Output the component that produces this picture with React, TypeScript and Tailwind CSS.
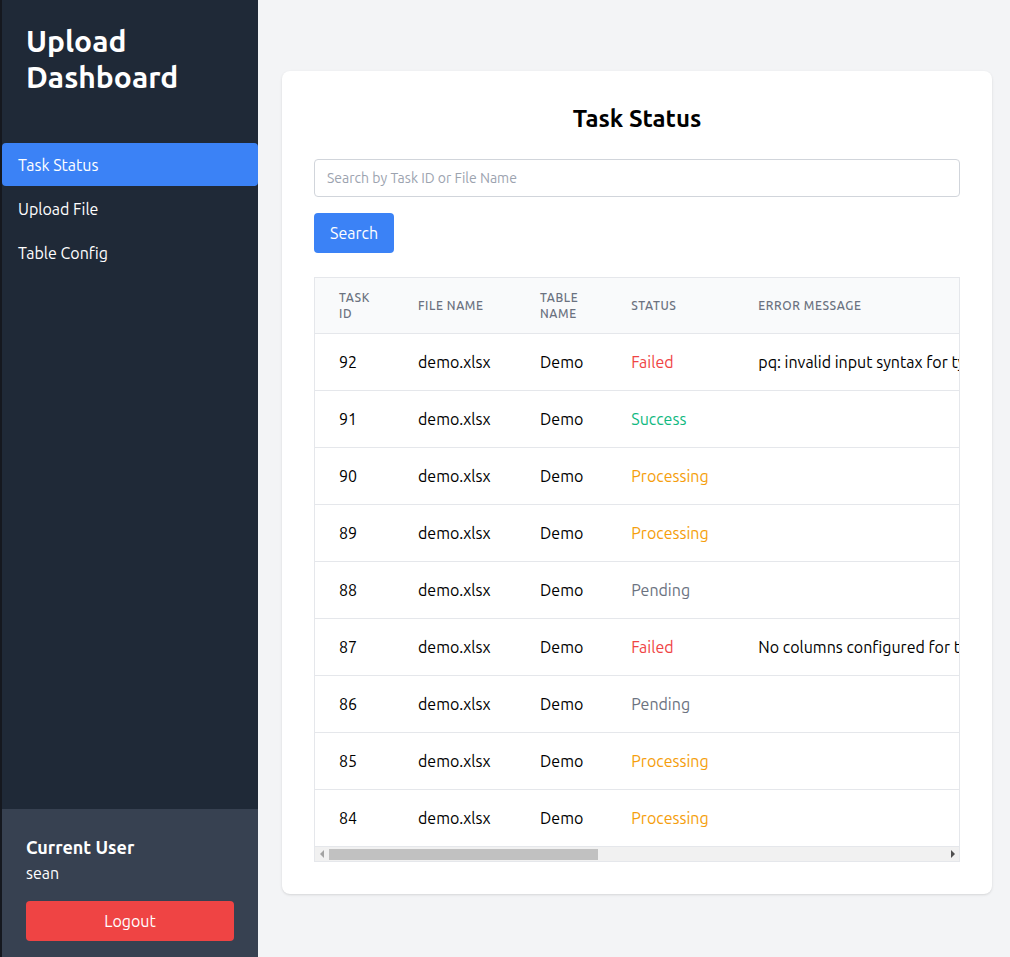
import React from "react";

const rows = [
  { id: 92, file: "demo.xlsx", table: "Demo", status: "Failed", err: "pq: invalid input syntax for type integer: \"abc\" (SQLSTATE 22P02)" },
  { id: 91, file: "demo.xlsx", table: "Demo", status: "Success", err: "" },
  { id: 90, file: "demo.xlsx", table: "Demo", status: "Processing", err: "" },
  { id: 89, file: "demo.xlsx", table: "Demo", status: "Processing", err: "" },
  { id: 88, file: "demo.xlsx", table: "Demo", status: "Pending", err: "" },
  { id: 87, file: "demo.xlsx", table: "Demo", status: "Failed", err: "No columns configured for table Demo" },
  { id: 86, file: "demo.xlsx", table: "Demo", status: "Pending", err: "" },
  { id: 85, file: "demo.xlsx", table: "Demo", status: "Processing", err: "" },
  { id: 84, file: "demo.xlsx", table: "Demo", status: "Processing", err: "" },
];

function statusClass(s: string) {
  if (s === "Failed") return "text-[#ef4444]";
  if (s === "Success") return "text-[#10b981]";
  if (s === "Processing") return "text-[#f59e0b]";
  return "text-[#6b7280]";
}

export default function App() {
  return (
    <div
      className="flex h-[957px] w-full overflow-hidden bg-[#f3f4f6]"
      style={{ fontFamily: "Ubuntu, Lato, 'Noto Sans', sans-serif" }}
    >
      <aside className="flex w-[258px] shrink-0 flex-col border-l-2 border-[#15181f] bg-[#1f2937] text-white">
        <div className="px-6 pt-[23px]">
          <h1 className="text-[30px] font-bold leading-[36px]">Upload Dashboard</h1>
        </div>
        <nav className="mt-[48px] flex flex-col">
          <a className="block h-[43px] rounded bg-[#3b82f6] px-4 text-base leading-[45px]">Task Status</a>
          <a className="block h-[44px] px-4 text-base leading-[46px]">Upload File</a>
          <a className="block h-[44px] px-4 text-base leading-[46px]">Table Config</a>
        </nav>
        <div className="mt-auto h-[148px] bg-[#374151] px-6 pt-[24px]">
          <div className="text-lg font-bold leading-7">Current User</div>
          <div className="text-base leading-6">sean</div>
          <button className="mt-[16px] h-10 w-[208px] rounded bg-[#ef4444] text-base text-white">Logout</button>
        </div>
      </aside>
      <main className="min-w-0 flex-1 pl-6 pr-[18px] pt-[71px]">
        <div className="h-[823px] rounded-lg bg-white px-8 pt-[32px] shadow">
          <h2 className="text-center text-2xl font-bold leading-8 text-black">Task Status</h2>
          <input
            className="mt-[24px] block h-[38px] w-full rounded border border-[#d1d5db] px-3 text-sm placeholder:text-[#9ca3af]"
            placeholder="Search by Task ID or File Name"
          />
          <button className="mt-4 h-10 rounded bg-[#3b82f6] px-4 text-base text-white">Search</button>
          <div className="mt-6 overflow-hidden border border-[#e5e7eb]">
            <table className="w-[1500px] border-collapse text-left">
              <thead className="bg-[#f9fafb]">
                <tr className="h-[55px]">
                  <th className="w-[79px] px-6 pt-[2px] text-xs font-medium uppercase leading-4 tracking-wider text-[#6b7280]">Task ID</th>
                  <th className="w-[122px] px-6 pt-[2px] text-xs font-medium uppercase leading-4 tracking-wider text-[#6b7280]">File Name</th>
                  <th className="w-[91px] px-6 pt-[2px] text-xs font-medium uppercase leading-4 tracking-wider text-[#6b7280]">Table Name</th>
                  <th className="w-[127px] px-6 pt-[2px] text-xs font-medium uppercase leading-4 tracking-wider text-[#6b7280]">Status</th>
                  <th className="px-6 pt-[2px] text-xs font-medium uppercase leading-4 tracking-wider text-[#6b7280]">Error Message</th>
                </tr>
              </thead>
              <tbody>
                {rows.map((r) => (
                  <tr key={r.id} className="h-[57px] border-t border-[#e5e7eb]">
                    <td className="px-6 text-base text-black">{r.id}</td>
                    <td className="whitespace-nowrap px-6 text-base text-black">{r.file}</td>
                    <td className="px-6 text-base text-black">{r.table}</td>
                    <td className={`px-6 text-base ${statusClass(r.status)}`}>{r.status}</td>
                    <td className="whitespace-nowrap px-6 text-base text-black">{r.err}</td>
                  </tr>
                ))}
              </tbody>
            </table>
            <div className="flex h-[15px] items-center border-t border-[#e5e7eb] bg-[#f1f1f1]">
              <div className="flex w-[14px] shrink-0 items-center justify-center">
                <svg width="5" height="8" viewBox="0 0 5 8"><path d="M4 0 L0 4 L4 8 Z" fill="#a3a3a3" /></svg>
              </div>
              <div className="h-[11px] w-[269px] bg-[#c1c1c1]" />
              <div className="flex-1" />
              <div className="flex w-[14px] shrink-0 items-center justify-center">
                <svg width="5" height="8" viewBox="0 0 5 8"><path d="M1 0 L5 4 L1 8 Z" fill="#505050" /></svg>
              </div>
            </div>
          </div>
        </div>
      </main>
    </div>
  );
}
